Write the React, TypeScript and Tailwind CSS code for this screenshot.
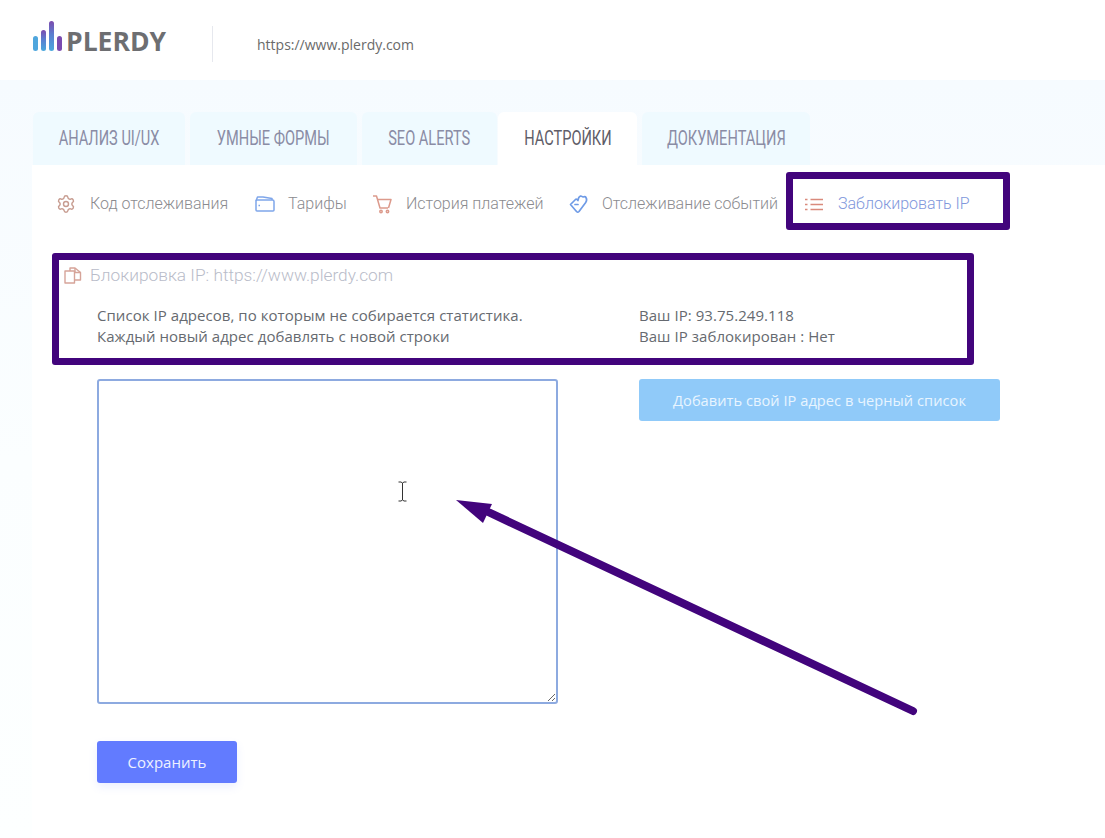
import { Settings } from 'lucide-react';

const tabs = [
  { label: 'АНАЛИЗ UI/UX', width: 'w-[152px]' },
  { label: 'УМНЫЕ ФОРМЫ', width: 'w-[167px]' },
  { label: 'SEO ALERTS', width: 'w-[135px]' },
  { label: 'НАСТРОЙКИ', width: 'w-[139px]', active: true },
  { label: 'ДОКУМЕНТАЦИЯ', width: 'w-[168px]' },
];

function Logo() {
  return (
    <div className="flex items-end gap-[3px]">
      <svg width="31" height="30" viewBox="0 0 31 30">
        <defs>
          <linearGradient id="bar" x1="0" y1="1" x2="0" y2="0">
            <stop offset="0" stopColor="#4aa8dc" />
            <stop offset="0.55" stopColor="#5b7fd0" />
            <stop offset="1" stopColor="#7c4bae" />
          </linearGradient>
        </defs>
        <rect x="1" y="15" width="5" height="15" rx="2.5" fill="#4fa6dd" />
        <rect x="9" y="9" width="5" height="21" rx="2.5" fill="url(#bar)" />
        <rect x="17" y="0" width="5" height="30" rx="2.5" fill="url(#bar)" />
        <rect x="25" y="15" width="5" height="15" rx="2.5" fill="#7a4bb0" />
      </svg>
      <span className="-mb-[3px] font-['Open_Sans',sans-serif] text-[26.5px] font-bold leading-[26px] text-[#6d6e71]">
        PLERDY
      </span>
    </div>
  );
}

function FolderIcon() {
  return (
    <svg width="20" height="16" viewBox="0 0 20 16" fill="none" stroke="#7fa6ea" strokeWidth="1.5" strokeLinejoin="round">
      <path d="M1 5 2.500 1H8l9 1.500V4" />
      <path d="M1 5c0-.6.4-1 1-1h15.500c.8 0 1.500.7 1.500 1.500V14c0 .6-.4 1-1 1H2c-.6 0-1-.4-1-1Z" />
      <path d="M3.500 9.500h1.500" />
    </svg>
  );
}

function CartIcon() {
  return (
    <svg width="19" height="19" viewBox="0 0 19 19" fill="none" stroke="#dc9a8c" strokeWidth="1.500" strokeLinejoin="round">
      <path d="M0 1h3.500l3.500 12h8" />
      <path d="M4.500 4.500H18l-2.500 8.500" />
      <circle cx="8" cy="16.500" r="1.200" />
      <circle cx="14.500" cy="16.500" r="1.200" />
    </svg>
  );
}

function TagIcon() {
  return (
    <svg width="20" height="20" viewBox="0 0 20 20" fill="none" stroke="#6f9be6" strokeWidth="1.700" strokeLinejoin="round" strokeLinecap="round">
      <path d="M1.500 10.500 6.500 5.500c1-.8 2 .2 2.500 1 .2-2 1-4 2.500-4.500 1.200-.2 1.800.8 2.500 1 1-.5 2.500-.5 3 .5.800 1.500.8 3.500-.3 5L10 17.500c-.8.800-1.700.8-2.500 0Z" />
      <path d="M6 10.500h3" />
    </svg>
  );
}

function ListIcon() {
  return (
    <svg width="18" height="13" viewBox="0 0 18 13" fill="none" stroke="#d98a7c" strokeWidth="1.400">
      <path d="M0 1.500h2.500M0 6.500h2.500M0 11.500h2.500" />
      <path d="M5.500 1.500H18M5.500 6.500H18M5.500 11.500H18" />
    </svg>
  );
}

function PagesIcon() {
  return (
    <svg width="18" height="17" viewBox="0 0 18 17" fill="none" stroke="#d6a499" strokeWidth="1.400" strokeLinejoin="round">
      <path d="M1 4h9.500v12H1Z" />
      <path d="M6 4V1h5l5.500 4.500V13h-6" />
      <path d="M11 1v4.500h5.500" />
    </svg>
  );
}

function NavItem({
  icon,
  label,
  active,
  className,
}: {
  icon: React.ReactNode;
  label: string;
  active?: boolean;
  className: string;
}) {
  return (
    <div className={`flex items-center ${className}`}>
      <span className="flex w-[33px] shrink-0 items-center">{icon}</span>
      <span className={active ? 'text-[#8197dc]' : 'text-[#8b8b8f]'}>{label}</span>
    </div>
  );
}

export default function App() {
  return (
    <div className="relative h-[838px] w-[1105px] overflow-hidden bg-white font-['Roboto',sans-serif]">
      <header className="flex h-[80px] items-center bg-white pl-[32px] pt-[8px]">
        <div className="w-[180px] pb-[16px]">
          <Logo />
        </div>
        <div className="h-[36px] w-px bg-[#e6e8ee]" />
        <div className="pl-[44px] font-['Open_Sans',sans-serif] text-[14px] text-[#6a6a6a]">
          https://www.plerdy.com
        </div>
      </header>

      <div className="h-[758px] bg-gradient-to-b from-[#f6fbff] via-[#fbfeff] to-[#fdffff] pl-[32px] pt-[32px]">
        <div className="flex h-[53px] items-stretch gap-[5px] pl-px">
          {tabs.map((tab) => (
            <div
              key={tab.label}
              className={`flex items-center justify-center rounded-t-[6px] ${tab.width} ${
                tab.active ? '-ml-[4px] bg-white text-[#5f5d68]' : 'bg-[#effaff] text-[#8a8ca5]'
              }`}
            >
              <span className="inline-block -translate-y-px scale-x-[0.73] whitespace-nowrap text-[20px]">
                {tab.label}
              </span>
            </div>
          ))}
        </div>

        <div className="h-[673px] bg-white pl-[25px]">
          <div className="flex items-center pb-[47px] pt-[27px] text-[16px] font-light leading-[24px]">
            <NavItem
              className="w-[198px]"
              label="Код отслеживания"
              icon={<Settings size={20} strokeWidth={1.7} className="-ml-[1px] text-[#c79c90]" />}
            />
            <NavItem className="w-[118px]" label="Тарифы" icon={<FolderIcon />} />
            <NavItem className="w-[196px]" label="История платежей" icon={<CartIcon />} />
            <NavItem className="w-[236px]" label="Отслеживание событий" icon={<TagIcon />} />
            <NavItem className="" label="Заблокировать IP" active icon={<ListIcon />} />
          </div>

          <div className="flex items-center pl-[7px] text-[17.300px] font-light leading-[24px] text-[#b9bcc9]">
            <PagesIcon />
            <span className="pl-[8px]">Блокировка IP: https://www.plerdy.com</span>
          </div>

          <div className="grid grid-cols-[542px_361px] pl-[40px] pt-[18px] font-['Open_Sans',sans-serif] text-[15px] leading-[21px] tracking-[0.05px] text-[#666a70]">
            <div>
              <p>Список IP адресов, по которым не собирается статистика.</p>
              <p>Каждый новый адрес добавлять с новой строки</p>
            </div>
            <div>
              <p>Ваш IP: 93.75.249.118</p>
              <p>Ваш IP заблокирован : Нет</p>
            </div>

            <textarea
              aria-label="Список IP адресов"
              className="mt-[32px] h-[325px] w-[461px] resize rounded-[3px] border-2 border-[#8daae0] bg-white outline-none"
            />
            <div className="pt-[32px]">
              <button className="h-[42px] w-[361px] rounded-[3px] bg-[#90caf9] font-['Open_Sans',sans-serif] text-[14.600px] font-medium text-[#e8f5ff]">
                Добавить свой IP адрес в черный список
              </button>
            </div>
          </div>

          <div className="pl-[40px] pt-[37px]">
            <button className="h-[42px] w-[140px] rounded-[3px] bg-[#627bff] font-['Open_Sans',sans-serif] text-[15px] font-medium text-[#eef1ff] shadow-[0_4px_8px_rgba(98,123,255,0.12)]">
              Сохранить
            </button>
          </div>
        </div>
      </div>

      {/* annotations drawn on top of the screenshot */}
      <div className="pointer-events-none absolute left-[786px] top-[172px] h-[58px] w-[224px] rounded-[3px] border-[7px] border-[#42047c]" />
      <div className="pointer-events-none absolute left-[52px] top-[253px] h-[112px] w-[922px] rounded-[3px] border-[7px] border-[#42047c]" />
      <svg className="pointer-events-none absolute left-0 top-0" width="1105" height="838" viewBox="0 0 1105 838">
        <path d="M913 711 486 511" stroke="#42047c" strokeWidth="8" strokeLinecap="round" />
        <path d="M456 500 492 504 483 523Z" fill="#42047c" />
        <path
          d="M398.500 482h2.500l1.500 1 1.500-1h2.500M402.500 483v17M398.500 501h2.500l1.500-1 1.500 1h2.500"
          fill="none"
          stroke="#333"
          strokeWidth="1"
        />
      </svg>
    </div>
  );
}
